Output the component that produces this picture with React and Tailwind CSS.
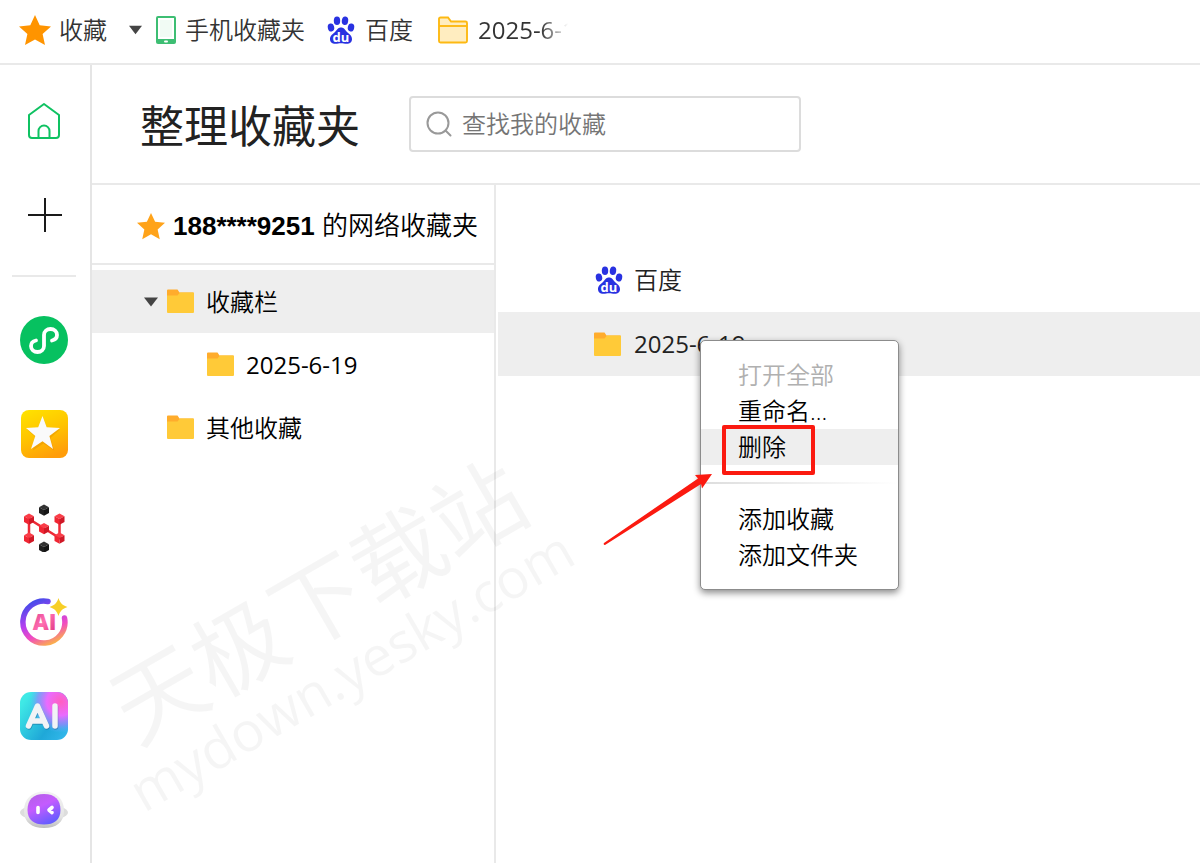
import { useState } from 'react';

const TREE = [
  { id: 'bar', name: '收藏栏', level: 0, open: true },
  { id: 'date', name: '2025-6-19', level: 1 },
  { id: 'other', name: '其他收藏', level: 0 },
];

const STAR = 'M16 1l4.7 10.2 11.3 1.2-8.4 7.6 2.4 11L16 25.4 6 31l2.4-11L0 12.4l11.3-1.2z';

function StarIcon({ className, fill }) {
  return (
    <svg viewBox="0 0 32 32" className={className} fill={fill} aria-hidden="true">
      <path d={STAR} />
    </svg>
  );
}

function Caret({ className }) {
  return (
    <svg viewBox="0 0 14 10" className={className} fill="#444444" aria-hidden="true">
      <path d="M0 0.5h14L7 9.5z" />
    </svg>
  );
}

function FolderIcon() {
  return (
    <svg viewBox="0 0 27 25" className="h-[25px] w-[27px] shrink-0" aria-hidden="true">
      <path d="M0 1.5Q0 .5 1 .5h9.500l2 3H26q1 0 1 1V10H0z" fill="#ffac2c" />
      <path d="M0 6.5h10.500l2.500-3H26q1 0 1 1V23q0 1-1 1H1q-1 0-1-1z" fill="#ffca38" />
    </svg>
  );
}

function OutlineFolderIcon() {
  return (
    <svg viewBox="0 0 32 28" className="h-7 w-8 shrink-0" aria-hidden="true">
      <path d="M2 3q0-1.500 1.500-1.500h7.500l3 4h14.500q1.500 0 1.500 1.500v18q0 1.500-1.500 1.500h-25Q2 26.500 2 25z" fill="#ffedc0" stroke="#fdb913" strokeWidth="1.900" />
      <path d="M2 10h28" stroke="#fdb913" strokeWidth="1.900" />
    </svg>
  );
}

function PhoneIcon() {
  return (
    <svg viewBox="0 0 22 28" className="h-7 w-[22px] shrink-0" aria-hidden="true">
      <rect x="1" y="0" width="20" height="28" rx="2" fill="#3dbe73" />
      <rect x="3" y="2" width="16" height="21" fill="#fff" />
      <rect x="5" y="4" width="12" height="17" fill="#f1fbf4" />
      <rect x="9" y="24.500" width="4" height="2" rx="1" fill="#fff" />
    </svg>
  );
}

function BaiduIcon() {
  return (
    <svg viewBox="0 0 28 28" className="size-7 shrink-0" fill="#2932e1" aria-hidden="true">
      <ellipse cx="4" cy="11.500" rx="3.200" ry="4" transform="rotate(-12 4 11.500)" />
      <ellipse cx="10" cy="4.800" rx="3.200" ry="4.300" />
      <ellipse cx="18" cy="4.800" rx="3.200" ry="4.300" transform="rotate(8 18 4.800)" />
      <ellipse cx="24" cy="11.500" rx="3.200" ry="4" transform="rotate(12 24 11.500)" />
      <path d="M14 11.500c3 0 4.200 2.400 6 4.500 2 2.200 5.300 3.600 5 7.500-.3 3.500-3 4.500-5.500 4.300-2-.2-3.500-.6-5.500-.6s-3.500.4-5.500.6C6 28 3.300 27 3 23.500c-.3-3.900 3-5.300 5-7.500 1.800-2.100 3-4.500 6-4.500z" />
      <text x="14" y="25.500" textAnchor="middle" fill="#fff" fontSize="13" fontWeight="700" fontFamily="Open Sans, sans-serif">du</text>
    </svg>
  );
}

function HomeIcon() {
  return (
    <svg viewBox="0 0 48 48" className="size-12" fill="none" stroke="#0fc262" strokeWidth="2" strokeLinejoin="round" aria-hidden="true">
      <path d="M24 7L39 18v20q0 3-3 3H12q-3 0-3-3V18z" />
      <path d="M18.500 41V34a5.500 5.500 0 0 1 11 0v7" />
    </svg>
  );
}

function PlusIcon() {
  return (
    <svg viewBox="0 0 48 48" className="size-12" stroke="#1a1a1a" strokeWidth="2" aria-hidden="true">
      <path d="M8 24h34M25 7v34" />
    </svg>
  );
}

function MiniProgramIcon() {
  return (
    <svg viewBox="0 0 48 48" className="size-12" fill="none" aria-hidden="true">
      <circle cx="24" cy="24" r="24" fill="#07c160" />
      <path d="M32 24.500c3-.7 5-2.700 5-5.500 0-3.400-2.900-6-6.500-6S24 15.600 24 19v11c0 3.400-2.900 6-6.500 6S11 33.400 11 30c0-2.800 2-4.800 5-5.500" stroke="#fff" strokeWidth="3.800" strokeLinecap="round" />
    </svg>
  );
}

function StarTileIcon() {
  return (
    <svg viewBox="0 0 48 48" className="size-12" aria-hidden="true">
      <defs>
        <linearGradient id="tile" x1="0.200" y1="0" x2="0.600" y2="1">
          <stop offset="0" stopColor="#ffe000" />
          <stop offset="0.500" stopColor="#ffc400" />
          <stop offset="1" stopColor="#ff9d0a" />
        </linearGradient>
      </defs>
      <rect x="1" y="0" width="47" height="48" rx="8" fill="url(#tile)" />
      <path d="M23 7.500l4.500 11.300 12.500.8-9.500 8.300 3.700 12.600-10.700-7-10.700 7 3.700-12.600L7 19.600l12-.8z" fill="#e08a00" opacity="0.400" />
      <path d="M22.500 6l4.200 11.300 13.300.6-10.600 8 3.600 13.100-10.500-7.800L11 39l4.300-13.100L6 18l12.200-.7z" fill="#fafafa" />
    </svg>
  );
}

function Cube({ x, y, colors }) {
  return (
    <g transform={`translate(${x} ${y})`}>
      <path d="M0-5.500L5-2.800 0 0-5-2.800z" fill={colors[0]} />
      <path d="M-5-2.800L0 0v5.800L-5 3z" fill={colors[1]} />
      <path d="M5-2.800L0 0v5.800L5 3z" fill={colors[2]} />
    </g>
  );
}

function MoleculeIcon() {
  const red = ['#fa3d48', '#f02633', '#d01826'];
  const black = ['#333333', '#202020', '#151515'];
  return (
    <svg viewBox="0 0 48 48" className="size-12" aria-hidden="true">
      <path d="M9 34V15l30.500 19V15" fill="none" stroke="#ee2a37" strokeWidth="2.500" />
      <Cube x={24} y={6} colors={black} />
      <Cube x={24} y={43} colors={black} />
      <Cube x={9} y={15} colors={red} />
      <Cube x={9} y={34} colors={red} />
      <Cube x={24} y={24.500} colors={red} />
      <Cube x={39.500} y={15} colors={red} />
      <Cube x={39.500} y={34} colors={red} />
    </svg>
  );
}

function AiRingIcon() {
  return (
    <svg viewBox="0 0 48 48" className="size-12" aria-hidden="true">
      <defs>
        <linearGradient id="ring" x1="0.300" y1="0" x2="0.750" y2="1">
          <stop offset="0" stopColor="#4a4bea" />
          <stop offset="0.400" stopColor="#b43ff0" />
          <stop offset="0.700" stopColor="#f14cc0" />
          <stop offset="1" stopColor="#fbb04a" />
        </linearGradient>
        <linearGradient id="ringText" x1="0" y1="0" x2="1" y2="1">
          <stop offset="0" stopColor="#d8348c" />
          <stop offset="0.500" stopColor="#ff6fb0" />
          <stop offset="1" stopColor="#d92c78" />
        </linearGradient>
      </defs>
      <path d="M28 3.500A21 21 0 1 0 44.500 20" fill="none" stroke="url(#ring)" strokeWidth="5.500" strokeLinecap="round" />
      <text x="24.500" y="32" textAnchor="middle" fontSize="22" fontWeight="800" fontFamily="Open Sans, sans-serif" fill="url(#ringText)">AI</text>
      <path d="M38.500 0c1.600 5 3.800 7.400 9 9-5.200 1.600-7.400 4-9 9-1.600-5-3.800-7.400-9-9 5.200-1.600 7.400-4 9-9z" fill="#f7cf27" />
    </svg>
  );
}

function AiTileIcon() {
  return (
    <svg viewBox="0 0 48 48" className="size-12" aria-hidden="true">
      <defs>
        <linearGradient id="aiBase" x1="0" y1="0.300" x2="1" y2="1">
          <stop offset="0" stopColor="#3fe9e6" />
          <stop offset="0.600" stopColor="#1fa8d8" />
          <stop offset="1" stopColor="#35b9ee" />
        </linearGradient>
        <radialGradient id="aiPink" cx="0.850" cy="0.200" r="0.650">
          <stop offset="0" stopColor="#ff5fc0" />
          <stop offset="0.450" stopColor="#e96bff" />
          <stop offset="0.750" stopColor="#9a86ff" stopOpacity="0.700" />
          <stop offset="1" stopColor="#5fb8ff" stopOpacity="0" />
        </radialGradient>
      </defs>
      <rect width="48" height="48" rx="11" fill="url(#aiBase)" />
      <rect width="48" height="48" rx="11" fill="url(#aiPink)" />
      <g fill="none" strokeWidth="5.500" strokeLinecap="round" strokeLinejoin="round">
        <path d="M9 35l9-20 9 20M13 30h10M35.500 15v20" stroke="#1c5a8c" opacity="0.450" />
        <path d="M8.500 34l9-20 9 20M13 29h10M35 14v20" stroke="#f1f3f6" />
      </g>
    </svg>
  );
}

function RobotIcon() {
  return (
    <svg viewBox="0 0 48 48" className="size-12" aria-hidden="true">
      <defs>
        <linearGradient id="face" x1="0.200" y1="0" x2="0.700" y2="1">
          <stop offset="0" stopColor="#b660e8" />
          <stop offset="0.400" stopColor="#c45cff" />
          <stop offset="1" stopColor="#5d5cff" />
        </linearGradient>
        <linearGradient id="shell" x1="0" y1="0" x2="0" y2="1">
          <stop offset="0" stopColor="#f3f3f3" />
          <stop offset="0.700" stopColor="#e4e4e4" />
          <stop offset="1" stopColor="#bdbdbd" />
        </linearGradient>
      </defs>
      <ellipse cx="24" cy="26.500" rx="24" ry="8" fill="#dddddd" />
      <path d="M24 5.500c13 0 20 8 20 19.500S36 42 24 42 4 36.500 4 25 11 5.500 24 5.500z" fill="url(#shell)" />
      <path d="M24 8c11 0 16.500 6 16.500 16S34 38.500 24 38.500 7.500 34 7.500 24 13 8 24 8z" fill="url(#face)" />
      <path d="M18 21.500v5M32 21.500l-3 2.500 3 2.500" stroke="#fff" strokeWidth="3.600" strokeLinecap="round" strokeLinejoin="round" fill="none" />
    </svg>
  );
}

const APPS = [
  { label: '小程序', Icon: MiniProgramIcon },
  { label: '收藏', Icon: StarTileIcon },
  { label: '纳米', Icon: MoleculeIcon },
  { label: 'AI 助手', Icon: AiRingIcon },
  { label: 'AI 工具', Icon: AiTileIcon },
  { label: '机器人', Icon: RobotIcon },
];

function BookmarksBar() {
  return (
    <nav className="flex h-[65px] shrink-0 items-center border-b-2 border-[#e9e9e9] pb-1 pl-[19px] text-[#333333]">
      <button className="mr-[13px] flex items-center gap-2 font-[350]">
        <StarIcon className="size-8" fill="#ff9400" />
        <span>收藏</span>
        <Caret className="ml-[14px] h-[10px] w-[13px]" />
      </button>
      <a href="#mobile" className="mr-[22px] flex items-center gap-2 font-[350]">
        <PhoneIcon />
        手机收藏夹
      </a>
      <a href="#baidu" className="mr-6 flex items-center gap-[10px] font-[350]">
        <BaiduIcon />
        百度
      </a>
      <a href="#folder" className="flex items-center gap-[9px]">
        <OutlineFolderIcon />
        <span className="w-[90px] overflow-hidden whitespace-nowrap bg-linear-to-r from-[#333333] from-70% to-transparent bg-clip-text text-transparent">2025-6-19</span>
      </a>
    </nav>
  );
}

function Sidebar() {
  return (
    <aside className="w-[92px] shrink-0 border-r-2 border-[#e5e5e5] px-3 pt-8">
      <div className="flex flex-col items-start gap-[46px] pl-2">
        <button aria-label="主页"><HomeIcon /></button>
        <button aria-label="新建"><PlusIcon /></button>
      </div>
      <hr className="mt-9 mb-[39px] w-16 border-t-2 border-[#e9e9e9]" />
      <div className="flex flex-col items-start gap-[46px] pl-2">
        {APPS.map(({ label, Icon }) => (
          <button key={label} aria-label={label}><Icon /></button>
        ))}
      </div>
    </aside>
  );
}

function ContextMenu() {
  return (
    <div role="menu" className="absolute top-7 left-[202px] z-10 flex w-[199px] flex-col rounded-[5px] border border-[#8c8c8c] bg-white py-4 font-[350] text-black shadow-[0_3px_7px_rgba(0,0,0,0.45)]">
      <button role="menuitem" disabled className="h-9 pl-[37px] text-left text-[#b0b0b0]">打开全部</button>
      <button role="menuitem" className="h-9 pl-[37px] text-left">重命名...</button>
      <button role="menuitem" className="relative h-9 bg-[#eeeeee] pl-[37px] text-left">
        删除
        <span className="absolute -top-1 left-[21px] h-[50px] w-[93px] rounded-xs border-4 border-[#fb1a10]" />
        <svg viewBox="0 0 112 74" className="absolute top-11 -left-[99px] h-[74px] w-28" fill="#fb1a10" aria-hidden="true">
          <path d="M110 1L93 2l3 3.500L2 70q-1 2 1 2L99 11l1 4.500z" />
        </svg>
      </button>
      <hr className="my-[17px] h-[2px] border-0 bg-linear-to-r from-[#dddddd] to-white" />
      <button role="menuitem" className="h-9 pl-[37px] text-left">添加收藏</button>
      <button role="menuitem" className="h-9 pl-[37px] text-left">添加文件夹</button>
    </div>
  );
}

function FolderTree() {
  const [selected, setSelected] = useState('bar');
  return (
    <section className="w-[404px] shrink-0 border-r-2 border-[#e9e9e9]">
      <h2 className="flex h-20 items-center gap-2 border-b-2 border-[#e9e9e9] pt-1 pl-[45px] text-[26px] whitespace-nowrap text-black">
        <StarIcon className="size-7 shrink-0" fill="#ffa31a" />
        <span className="font-['Liberation_Sans','Noto_Sans_CJK_SC',sans-serif] font-[350]">
          <span className="font-bold">188****9251</span> 的网络收藏夹
        </span>
      </h2>
      <ul className="pt-[5px]">
        {TREE.map(item => (
          <li key={item.id}>
            <button onClick={() => setSelected(item.id)}
              className={`flex h-[63px] w-full items-center text-black ${item.level === 1 ? 'pl-[92px]' : 'pl-[52px] font-[350]'} ${
                selected === item.id ? 'bg-[#eeeeee]' : ''
              }`}>
              <span className="w-[23px]">{item.open && <Caret className="h-[10px] w-[14px]" />}</span>
              <FolderIcon />
              <span className="ml-3">{item.name}</span>
            </button>
          </li>
        ))}
      </ul>
    </section>
  );
}

function Watermark() {
  return (
    <div className="pointer-events-none absolute top-[632px] left-[336px] -translate-x-1/2 -translate-y-1/2 -rotate-30 text-center whitespace-nowrap text-black opacity-[0.035]">
      <p className="text-[92px] leading-20">天极下载站</p>
      <p className="pr-3 text-[55px] leading-18">mydown.yesky.com</p>
    </div>
  );
}

export default function App() {
  return (
    <div className="relative flex min-h-screen flex-col overflow-hidden bg-white font-['Open_Sans','Noto_Sans_CJK_SC',sans-serif] text-2xl">
      <BookmarksBar />
      <div className="flex flex-1">
        <Sidebar />
        <main className="flex min-w-0 flex-1 flex-col">
          <header className="flex h-[120px] shrink-0 items-center gap-[49px] border-b-2 border-[#e9e9e9] px-12">
            <h1 className="pt-1 text-[44px] whitespace-nowrap text-[#222222]">整理收藏夹</h1>
            <label className="flex h-14 w-[392px] items-center gap-2 rounded-[4px] border-2 border-[#dcdcdc] px-[15px]">
              <svg viewBox="0 0 28 28" className="size-7 shrink-0" fill="none" stroke="#999999" strokeWidth="2" aria-hidden="true">
                <circle cx="12" cy="13" r="10.500" />
                <path d="M19.500 20.500l5 5" strokeLinecap="round" />
              </svg>
              <input type="text" aria-label="查找我的收藏" placeholder="查找我的收藏" className="w-full min-w-0 bg-transparent font-[350] outline-none placeholder:text-[#757575]" />
            </label>
          </header>
          <div className="flex flex-1">
            <FolderTree />
            <section className="min-w-0 flex-1 pt-[63px] pl-[2px] text-[#222222]">
              <ul>
                <li className="flex h-16 items-center pl-[97px]">
                  <BaiduIcon />
                  <a href="#baidu" className="ml-[11px] font-[350]">百度</a>
                </li>
                <li className="relative flex h-16 items-center bg-[#eeeeee] pl-24">
                  <FolderIcon />
                  <a href="#folder" className="ml-[13px]">2025-6-19</a>
                  <ContextMenu />
                </li>
              </ul>
            </section>
          </div>
        </main>
      </div>
      <Watermark />
    </div>
  );
}
